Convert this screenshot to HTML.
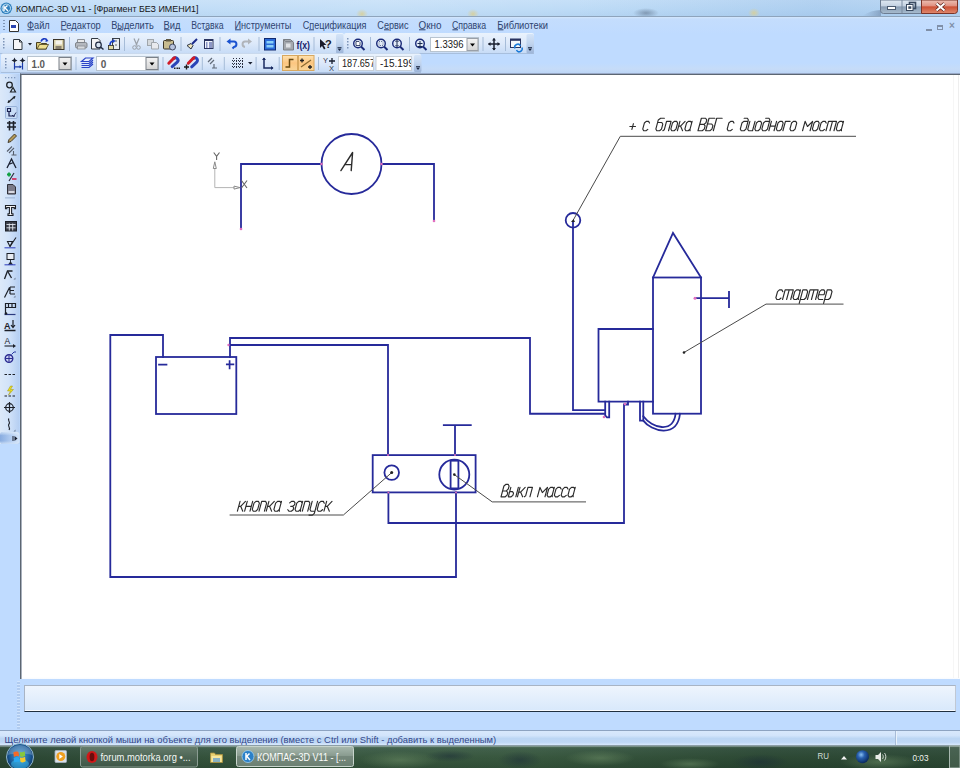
<!DOCTYPE html>
<html><head><meta charset="utf-8">
<style>
*{margin:0;padding:0;box-sizing:border-box}
html,body{width:960px;height:768px;overflow:hidden;background:#BFDBFF;font-family:"Liberation Sans",sans-serif}
.a{position:absolute}
#title{left:0;top:0;width:960px;height:17px;background:linear-gradient(90deg,rgba(255,255,255,0) 0%,rgba(255,255,255,0.12) 40%,rgba(120,160,210,0.0) 60%,rgba(100,150,210,0.18) 85%,rgba(100,150,210,0.1) 100%),linear-gradient(180deg,#c6e0f8 0%,#bddbf6 60%,#b6d5f2 100%);border-bottom:1px solid #8ea4bc}
#title .t{left:15.5px;top:3.6px;font-size:9px;color:#222;white-space:pre;letter-spacing:0.05px}
#menu{left:0;top:17px;width:960px;height:17px;background:linear-gradient(180deg,#d4e6fc 0,#c4ddfd 2px,#bfdbff 100%)}
.mi{top:4px;font-size:9.1px;color:#34496e;white-space:pre}
.mi u{text-decoration:underline}
.tb{height:20px;border-radius:3px;background:linear-gradient(180deg,#eef5fd 0%,#dbe9fa 45%,#c9ddf6 100%);border-bottom:1px solid #a9c2e2}
.sep{width:1px;height:14px;background:#9fb6d6;border-right:1px solid #fff}
.grip{width:2px;height:12px;background:repeating-linear-gradient(180deg,#7f95b5 0 1px,transparent 1px 3px)}
#canvas{left:20px;top:73px;width:940px;height:606px;background:linear-gradient(180deg,#fff 0,#fff 603px,#f4f8ff 606px);border-top:1px solid #98a8c6;border-left:1px solid #5c6672;box-shadow:inset 0 1px 0 #5c6672,inset 1px 0 0 #a8b0bc}
#lefttb{left:0;top:74px;width:20px;height:370px;background:linear-gradient(90deg,#dbe9f9 0%,#cfe2f9 40%,#b8d2f3 100%)}
#status{left:0;top:730px;width:960px;height:16px;background:linear-gradient(180deg,#d8e8fc 0%,#d2e4fb 30%,#bcd6f4 50%,#bed7f5 75%,#d6e7fc 92%,#d0e0f4 100%);border-top:1px solid #8da3c1}
#status .t{left:4.5px;top:2.8px;font-size:9.4px;color:#34478a;white-space:pre}
#task{left:0;top:745px;width:960px;height:23px;background:linear-gradient(180deg,#3f5a55 0%,#2e4a3a 40%,#2d4a30 100%);border-top:1px solid #8a9ba0}
</style></head><body>
<div class="a" style="left:0;top:0;width:960px;height:768px;overflow:hidden">

<!-- title bar -->
<div id="title" class="a">
  <svg class="a" style="left:0;top:2px" width="13" height="13" viewBox="0 0 13 13"><circle cx="6.3" cy="6.3" r="5.8" fill="#2f7fbd"/><circle cx="6.3" cy="6.3" r="4.2" fill="none" stroke="#bfe3f7" stroke-width="1"/><path d="M4 3.5v5.5M4 6.5l3.5-3M5 6l3 3" stroke="#fff" stroke-width="1.4" fill="none"/></svg>
  <svg class="a" style="left:0;top:0" width="880" height="16" viewBox="0 0 880 16">
    <defs>
      <radialGradient id="by"><stop offset="0" stop-color="#d8cf98" stop-opacity="0.9"/><stop offset="1" stop-color="#d8cf98" stop-opacity="0"/></radialGradient>
      <radialGradient id="bd"><stop offset="0" stop-color="#6a7f98" stop-opacity="0.7"/><stop offset="1" stop-color="#6a7f98" stop-opacity="0"/></radialGradient>
    </defs>
    <ellipse cx="362" cy="14" rx="6" ry="5" fill="url(#by)"/>
    <ellipse cx="473" cy="14" rx="6" ry="5" fill="url(#by)"/>
    <ellipse cx="754" cy="13" rx="6" ry="5" fill="url(#by)"/>
    <ellipse cx="646" cy="13" rx="13" ry="5" fill="url(#bd)"/>
  </svg>
  <svg class="a" style="left:0;top:0" width="260" height="16" viewBox="0 0 260 16"><text x="16" y="11.6" font-family="Liberation Sans" font-size="9.2" fill="#151515" textLength="182.5" lengthAdjust="spacingAndGlyphs">КОМПАС-3D V11 - [Фрагмент БЕЗ ИМЕНИ1]</text></svg>
  <!-- window buttons -->
  <svg class="a" style="left:860px;top:0" width="100" height="17" viewBox="860 0 100 17">
    <defs>
      <linearGradient id="wbg" x1="0" y1="0" x2="0" y2="1"><stop offset="0" stop-color="#dfe8f2"/><stop offset="0.45" stop-color="#c4d2e2"/><stop offset="0.5" stop-color="#8a9db4"/><stop offset="1" stop-color="#a8bccf"/></linearGradient>
      <linearGradient id="wbc" x1="0" y1="0" x2="0" y2="1"><stop offset="0" stop-color="#ecc0b4"/><stop offset="0.45" stop-color="#e09080"/><stop offset="0.5" stop-color="#cc5034"/><stop offset="1" stop-color="#e08a70"/></linearGradient>
      <linearGradient id="tsh" x1="0" y1="0" x2="1" y2="0"><stop offset="0" stop-color="#7890b0" stop-opacity="0"/><stop offset="1" stop-color="#6880a0" stop-opacity="0.55"/></linearGradient>
    </defs>
    <path d="M862 16c6-4 12-6 19-6v6z" fill="url(#tsh)"/>
    <path d="M880.5 0v10.5a3 3 0 0 0 3 3h38v-13.5z" fill="url(#wbg)" stroke="#6c7c92" stroke-width="1"/>
    <path d="M921.5 0v13.5h33a3 3 0 0 0 3-3v-10.5z" fill="url(#wbc)" stroke="#7a3428" stroke-width="1"/>
    <rect x="901.5" y="0" width="1" height="13" fill="#7a8ca2"/>
    <rect x="887.5" y="6.5" width="8" height="3" fill="#fff" stroke="#4a5a70" stroke-width="1"/>
    <rect x="909.5" y="2.5" width="6" height="6" fill="none" stroke="#3a4a60" stroke-width="1.6"/>
    <rect x="906.5" y="4.5" width="6.5" height="6" fill="#fff" stroke="#3a4a60" stroke-width="1"/>
    <rect x="908.3" y="6.3" width="3" height="2.5" fill="#3a4a60"/>
    <path d="M936.5 3.5l8 7M944.5 3.5l-8 7" stroke="#5a2018" stroke-width="3.4"/>
    <path d="M936.5 3.5l8 7M944.5 3.5l-8 7" stroke="#fff" stroke-width="2"/>
  </svg>
</div>

<!-- menu -->
<div id="menu" class="a">
  <div class="a grip" style="left:3px;top:3px;height:11px"></div>
  <svg class="a" style="left:8px;top:2px" width="12" height="14" viewBox="0 0 12 14"><path d="M1.5 1.5h6l3 3v8h-9z" fill="#fff" stroke="#333" stroke-width="1"/><rect x="3" y="6" width="5" height="3" fill="#2a45b0"/></svg>
  <svg class="a" style="left:0;top:0" width="600" height="17" viewBox="0 17 600 17">
    <text x="27.0" y="28.6" font-family="Liberation Sans" font-size="10" fill="#2f4470" textLength="22.7" lengthAdjust="spacingAndGlyphs">Файл</text>
    <text x="60.5" y="28.6" font-family="Liberation Sans" font-size="10" fill="#2f4470" textLength="40.3" lengthAdjust="spacingAndGlyphs">Редактор</text>
    <text x="111.2" y="28.6" font-family="Liberation Sans" font-size="10" fill="#2f4470" textLength="42.6" lengthAdjust="spacingAndGlyphs">Выделить</text>
    <text x="163.5" y="28.6" font-family="Liberation Sans" font-size="10" fill="#2f4470" textLength="17.0" lengthAdjust="spacingAndGlyphs">Вид</text>
    <text x="191.2" y="28.6" font-family="Liberation Sans" font-size="10" fill="#2f4470" textLength="32.3" lengthAdjust="spacingAndGlyphs">Вставка</text>
    <text x="234.5" y="28.6" font-family="Liberation Sans" font-size="10" fill="#2f4470" textLength="56.8" lengthAdjust="spacingAndGlyphs">Инструменты</text>
    <text x="302.8" y="28.6" font-family="Liberation Sans" font-size="10" fill="#2f4470" textLength="63.7" lengthAdjust="spacingAndGlyphs">Спецификация</text>
    <text x="377.3" y="28.6" font-family="Liberation Sans" font-size="10" fill="#2f4470" textLength="31.2" lengthAdjust="spacingAndGlyphs">Сервис</text>
    <text x="418.5" y="28.6" font-family="Liberation Sans" font-size="10" fill="#2f4470" textLength="23.0" lengthAdjust="spacingAndGlyphs">Окно</text>
    <text x="451.9" y="28.6" font-family="Liberation Sans" font-size="10" fill="#2f4470" textLength="34.2" lengthAdjust="spacingAndGlyphs">Справка</text>
    <text x="497.3" y="28.6" font-family="Liberation Sans" font-size="10" fill="#2f4470" textLength="50.8" lengthAdjust="spacingAndGlyphs">Библиотеки</text>
    <rect x="27.5" y="29.3" width="6.5" height="1" fill="#2f4470"/><rect x="61" y="29.3" width="5.5" height="1" fill="#2f4470"/><rect x="117" y="29.3" width="6.0" height="1" fill="#2f4470"/><rect x="164" y="29.3" width="5.5" height="1" fill="#2f4470"/><rect x="204" y="29.3" width="5.0" height="1" fill="#2f4470"/><rect x="235" y="29.3" width="6.0" height="1" fill="#2f4470"/><rect x="309" y="29.3" width="5.0" height="1" fill="#2f4470"/><rect x="384" y="29.3" width="5.0" height="1" fill="#2f4470"/><rect x="419" y="29.3" width="6.5" height="1" fill="#2f4470"/><rect x="452.4" y="29.3" width="5.6" height="1" fill="#2f4470"/><rect x="497.8" y="29.3" width="5.7" height="1" fill="#2f4470"/>
  </svg>
  <div class="a" style="left:926px;top:12px;width:6px;height:1.5px;background:#8090a8"></div>
  <div class="a" style="left:937px;top:8px;width:6px;height:5px;border:1px solid #8090a8;border-top-width:2px"></div>
  <div class="a" style="left:949px;top:3px;font:bold 10px 'Liberation Sans';color:#8090a8">×</div>
</div>

<!-- toolbars placeholder -->
<div class="a" style="left:0;top:63px;width:960px;height:10px;background:linear-gradient(180deg,#bfdbff,#c6dcf8 60%,#bcd6f6)"></div>
<svg class="a" style="left:0;top:0" width="960" height="80" viewBox="0 0 960 80">
<defs>
  <linearGradient id="tbg" x1="0" y1="0" x2="0" y2="1">
    <stop offset="0" stop-color="#eaf3fd"/><stop offset="0.5" stop-color="#dde9fa"/><stop offset="1" stop-color="#c6dbf6"/>
  </linearGradient>
  <linearGradient id="chev" x1="0" y1="0" x2="0" y2="1">
    <stop offset="0" stop-color="#d4e4f8"/><stop offset="0.5" stop-color="#c0d4ee"/><stop offset="1" stop-color="#9cb4d8"/>
  </linearGradient>
  <linearGradient id="org" x1="0" y1="0" x2="0" y2="1">
    <stop offset="0" stop-color="#ffe2b0"/><stop offset="0.5" stop-color="#fcc680"/><stop offset="1" stop-color="#f8d69a"/>
  </linearGradient>
  <linearGradient id="ddb" x1="0" y1="0" x2="0" y2="1">
    <stop offset="0" stop-color="#f4f4f4"/><stop offset="1" stop-color="#d4d4d4"/>
  </linearGradient>
</defs>
<!-- bands -->
<rect x="0" y="33" width="344" height="20.5" rx="2" fill="url(#tbg)"/>
<rect x="0" y="53" width="344" height="1" fill="#a8bfdd"/>
<rect x="336" y="34" width="7.5" height="19.5" rx="1.5" fill="url(#chev)"/>
<rect x="344" y="33" width="190" height="20.5" rx="2" fill="url(#tbg)"/>
<rect x="344" y="53" width="190" height="1" fill="#a8bfdd"/>
<rect x="526.5" y="34" width="7.5" height="19.5" rx="1.5" fill="url(#chev)"/>
<rect x="1" y="53.5" width="420" height="19" rx="2" fill="url(#tbg)"/>
<rect x="1" y="72" width="420" height="1" fill="#a8bfdd"/>
<rect x="414" y="55" width="7.5" height="17" rx="1.5" fill="url(#chev)"/>
<!-- chevron arrows -->
<g fill="#1d2a44">
  <path d="M337.5 48.5h4l-2 2.5z"/><rect x="337.5" y="47" width="4" height="0.8"/>
  <path d="M528 48.5h4l-2 2.5z"/><rect x="528" y="47" width="4" height="0.8"/>
  <path d="M416 67.5h4l-2 2.5z"/><rect x="416" y="66" width="4" height="0.8"/>
</g>
<!-- grips -->
<g fill="#7d94b8">
  <rect x="3" y="38" width="1.5" height="1.5"/><rect x="3" y="41" width="1.5" height="1.5"/><rect x="3" y="44" width="1.5" height="1.5"/><rect x="3" y="47" width="1.5" height="1.5"/>
  <rect x="347" y="38" width="1.5" height="1.5"/><rect x="347" y="41" width="1.5" height="1.5"/><rect x="347" y="44" width="1.5" height="1.5"/><rect x="347" y="47" width="1.5" height="1.5"/>
  <rect x="5" y="58" width="1.5" height="1.5"/><rect x="5" y="61" width="1.5" height="1.5"/><rect x="5" y="64" width="1.5" height="1.5"/><rect x="5" y="67" width="1.5" height="1.5"/>
</g>
<!-- separators -->
<g fill="#a6bcd8">
  <rect x="69" y="37" width="1" height="14"/><rect x="124" y="37" width="1" height="14"/><rect x="180.5" y="37" width="1" height="14"/><rect x="219.5" y="37" width="1" height="14"/><rect x="258.5" y="37" width="1" height="14"/><rect x="313.5" y="37" width="1" height="14"/>
  <rect x="370" y="37" width="1" height="14"/><rect x="409" y="37" width="1" height="14"/><rect x="482.5" y="37" width="1" height="14"/><rect x="505" y="37" width="1" height="14"/>
  <rect x="75.5" y="57" width="1" height="13"/><rect x="162.5" y="57" width="1" height="13"/><rect x="201.8" y="57" width="1" height="13"/><rect x="223.8" y="57" width="1" height="13"/><rect x="255.6" y="57" width="1" height="13"/><rect x="278.7" y="57" width="1" height="13"/><rect x="318" y="57" width="1" height="13"/>
</g>
<!-- ===== toolbar 1 icons ===== -->
<!-- new -->
<path d="M13.5 39.5h6l2.5 2.5v7.5h-8.5z" fill="#f6f6f8" stroke="#303840" stroke-width="1"/>
<path d="M19.5 39.5v2.5h2.5" fill="none" stroke="#303840" stroke-width="1"/>
<path d="M28 43h4l-2 2.5z" fill="#1a2030"/>
<!-- open -->
<path d="M36.5 42.5h4l1 1h5v5.5h-10z" fill="#d8c878" stroke="#4a4020" stroke-width="1"/>
<path d="M37 49l2.5-4.5h9l-2.5 4.5z" fill="#f0e090" stroke="#4a4020" stroke-width="0.8"/>
<path d="M41 41.5c1-3 4-3.5 6-1.5" fill="none" stroke="#1a3ac0" stroke-width="1.6"/>
<path d="M46 38.5l2.5 2.5l-3 1z" fill="#1a3ac0"/>
<!-- save -->
<rect x="53.5" y="39.5" width="10.5" height="10" fill="#d8d0a8" stroke="#3a3428" stroke-width="1"/>
<rect x="55.5" y="40.5" width="6.5" height="4" fill="#f4f2ea"/>
<rect x="55.5" y="46" width="6" height="3" fill="#888070"/>
<!-- print (gray) -->
<path d="M77.5 39.5h7v3h-7z" fill="#e8e8e8" stroke="#8a8e94" stroke-width="1"/>
<rect x="75.5" y="42.5" width="11.5" height="5.5" rx="1.5" fill="#b4b8be" stroke="#80848a" stroke-width="1"/>
<rect x="77.5" y="46" width="7.5" height="3" fill="#d8dade" stroke="#8a8e94" stroke-width="0.8"/>
<!-- preview -->
<path d="M91.5 38.5h6.5l2 2v8.5h-8.5z" fill="#f4f4f4" stroke="#303840" stroke-width="1"/>
<circle cx="98.5" cy="45" r="2.8" fill="#d8e4f0" stroke="#202a40" stroke-width="1.2"/>
<path d="M100.5 47l3 2.5" stroke="#202a40" stroke-width="1.6"/>
<!-- third doc -->
<rect x="112.5" y="38.5" width="7" height="11" fill="#e8ecf0" stroke="#3a4048" stroke-width="1"/>
<path d="M116 40v2M116 44v2" stroke="#3a4048" stroke-width="0.8"/>
<rect x="108.5" y="45.5" width="5" height="4" fill="#e0d8a0" stroke="#2a2a2a" stroke-width="0.8"/>
<path d="M110 45c0-3 2-4 4-4" fill="none" stroke="#1a40c8" stroke-width="1.6"/>
<path d="M113 39l2.5 2l-2.5 2z" fill="#1a40c8"/>
<!-- cut gray -->
<path d="M134 38.5l3 7M139 38.5l-3 7" stroke="#9aa0a8" stroke-width="1.2" fill="none"/>
<circle cx="134.5" cy="47.5" r="1.8" fill="none" stroke="#9aa0a8" stroke-width="1"/>
<circle cx="138.5" cy="47.5" r="1.8" fill="none" stroke="#9aa0a8" stroke-width="1"/>
<!-- copy gray -->
<rect x="147.5" y="39.5" width="6" height="6" fill="#d4d8dc" stroke="#a0a6ac" stroke-width="1"/>
<path d="M151.5 42.5h5l2 2v4.5h-7z" fill="#e8eaee" stroke="#a0a6ac" stroke-width="1"/>
<!-- paste -->
<rect x="163.5" y="40.5" width="10" height="8.5" rx="1" fill="#c8bc90" stroke="#3a3428" stroke-width="1"/>
<rect x="166" y="39" width="5" height="2.5" fill="#605840"/>
<circle cx="172.5" cy="47" r="3" fill="#b8c4e0" stroke="#404860" stroke-width="1"/>
<!-- brush -->
<path d="M187 45.5l4-2l2 2l-2 3.5z" fill="#f0e8c0" stroke="#2a3040" stroke-width="1"/>
<path d="M192 44l5-5" stroke="#1a2a8a" stroke-width="2"/>
<!-- table -->
<rect x="204.5" y="39.5" width="8.5" height="9" fill="#f0f4fa" stroke="#2a3460" stroke-width="1"/>
<rect x="204.5" y="39.5" width="8.5" height="1.5" fill="#2a3460"/>
<path d="M206 43h1.5M206 45h1.5M206 47h1.5M209 43h3M209 45h3M209 47h3" stroke="#2a3a90" stroke-width="1"/>
<!-- undo -->
<path d="M229.5 41.5h4.5c3 0 3.5 5 0 5.5l-1.5 1.5" fill="none" stroke="#1a52d0" stroke-width="2"/>
<path d="M226.5 41.5l4-3v6z" fill="#1a52d0"/>
<!-- redo gray -->
<path d="M249 41.5h-4c-3 0-3.5 5 0 5.5" fill="none" stroke="#b0b4ba" stroke-width="2"/>
<path d="M252 41.5l-4-3v6z" fill="#b0b4ba"/>
<!-- blue box -->
<rect x="264.5" y="38.5" width="11" height="11.5" fill="#2a6ad8" stroke="#102a70" stroke-width="1"/>
<rect x="266.5" y="41" width="7" height="2.5" fill="#8ad0f8"/>
<rect x="266.5" y="45" width="7" height="2.5" fill="#8ad0f8"/>
<!-- gray icon -->
<path d="M283.5 39.5h7l3 3v7.5h-10z" fill="#a4a8ae" stroke="#7a7e84" stroke-width="1"/>
<path d="M283.5 39.5l2 2h6l2 -0.5" fill="none" stroke="#7a7e84" stroke-width="0.8"/>
<rect x="286" y="43.5" width="4.5" height="4" fill="#e0e2e6"/>
<!-- f(x) -->
<text x="296.5" y="48.5" font-family="Liberation Sans" font-weight="bold" font-size="11.5" fill="#18206a" textLength="13.5" lengthAdjust="spacingAndGlyphs">f(x)</text>
<!-- arrow ? -->
<path d="M320 39v9l2-2l2 3.5l1.5-1l-2-3.5h3z" fill="#1a1a2a"/>
<text x="325" y="48" font-family="Liberation Sans" font-weight="bold" font-size="11" fill="#1a1a2a">?</text>
<!-- zoom icons -->
<g fill="none" stroke="#1a2a78" stroke-width="1.4">
  <circle cx="358" cy="43.5" r="4.3" fill="#e4ecf8"/><path d="M361 46.5l3.5 3.5" stroke-width="2"/>
  <circle cx="381" cy="43.5" r="4.3" fill="#e4ecf8"/><path d="M384 46.5l3.5 3.5" stroke-width="2"/>
  <circle cx="397" cy="43.5" r="4.3" fill="#e4ecf8"/><path d="M400 46.5l3.5 3.5" stroke-width="2"/>
  <circle cx="420" cy="43.5" r="4.3" fill="#e4ecf8"/><path d="M423 46.5l3.5 3.5" stroke-width="2"/>
</g>
<path d="M356 41.5h3l1 1v3h-4z" fill="#fff" stroke="#1a2a50" stroke-width="0.8"/>
<rect x="379" y="41.5" width="4" height="4" fill="none" stroke="#4a5a80" stroke-width="0.8" stroke-dasharray="1 1"/>
<path d="M397 40.5v6M395.5 42l1.5-1.5l1.5 1.5M395.5 45l1.5 1.5l1.5-1.5" fill="none" stroke="#1a2a50" stroke-width="1"/>
<path d="M417.5 43.5h5M420 41v5M417.5 46.5h5" fill="none" stroke="#1a2a50" stroke-width="1"/>
<!-- combo 1.3396 -->
<rect x="430.5" y="37.5" width="48" height="14" fill="#fff" stroke="#b8c4d0" stroke-width="1"/>
<rect x="467" y="38.5" width="11" height="12" fill="url(#ddb)" stroke="#9aa0a8" stroke-width="1"/>
<path d="M470 43.5h5l-2.5 3z" fill="#000"/>
<text x="434.5" y="48.3" font-family="Liberation Sans" font-size="11" fill="#202020" textLength="29" lengthAdjust="spacingAndGlyphs">1.3396</text>
<!-- move cross -->
<path d="M494 38.5v11.5M488.5 44h11" stroke="#1a2030" stroke-width="1.5"/>
<path d="M494 38l-2 2.5h4zM494 50.5l-2-2.5h4zM488 44l2.5-2v4zM500 44l-2.5-2v4z" fill="#1a2030"/>
<!-- window refresh -->
<rect x="510.5" y="39" width="10" height="8.5" fill="#f4f6fa" stroke="#2a3460" stroke-width="1"/>
<rect x="510.5" y="39" width="10" height="1.8" fill="#2a3460"/>
<path d="M515 48.5a3 3 0 0 1 5.5-2.5M522 47.5a3 3 0 0 1-5.5 2.5" fill="none" stroke="#1a7ad8" stroke-width="1.5"/>
<!-- ===== toolbar 2 icons ===== -->
<!-- step icon -->
<path d="M14.5 57.5l0.9 2.1l2.1 0.9l-2.1 0.9l-0.9 2.1l-0.9-2.1l-2.1-0.9l2.1-0.9z" fill="#1a2030"/>
<path d="M22.5 57.5l0.9 2.1l2.1 0.9l-2.1 0.9l-0.9 2.1l-0.9-2.1l-2.1-0.9l2.1-0.9z" fill="#1a2030"/>
<path d="M14.5 63v6.5M22.5 63v6.5M15 66.8h6" stroke="#1a3aa8" stroke-width="1.2"/>
<path d="M19.5 65.3l2.5 1.5l-2.5 1.5z" fill="#1a3aa8"/>
<!-- combo 1.0 -->
<rect x="27.5" y="56.5" width="44" height="14" fill="#fff" stroke="#b8c4d0" stroke-width="1"/>
<rect x="59" y="57.5" width="12" height="12" fill="url(#ddb)" stroke="#7a8088" stroke-width="1"/>
<path d="M62.5 62.5h5l-2.5 3z" fill="#000"/>
<text x="31.5" y="67.8" font-family="Liberation Sans" font-weight="bold" font-size="10" fill="#5a5a5a" textLength="13.5" lengthAdjust="spacingAndGlyphs">1.0</text>
<!-- layers -->
<g fill="none" stroke="#2a44c8" stroke-width="1.2">
  <path d="M81.5 61.5l4-3.5h7.5l-4 3.5z" fill="#e8eefc"/>
  <path d="M81.5 63.5h7.5l4-3.5M81.5 65.5h7.5l4-3.5M81.5 67.5h7.5l4-3.5"/>
</g>
<!-- combo 0 -->
<rect x="96.5" y="56.5" width="62" height="14" fill="#fff" stroke="#b8c4d0" stroke-width="1"/>
<rect x="146" y="57.5" width="12" height="12" fill="url(#ddb)" stroke="#7a8088" stroke-width="1"/>
<path d="M149.5 62.5h5l-2.5 3z" fill="#000"/>
<text x="100.8" y="67.8" font-family="Liberation Sans" font-weight="bold" font-size="10" fill="#5a5a5a">0</text>
<!-- magnets -->
<path d="M173.5 58.5a2.6 2.6 0 0 1 3.7 3.7L172.2 66.6" fill="none" stroke="#2a44b8" stroke-width="3" stroke-linecap="round"/>
<path d="M168.8 63.2L173.5 58.5" stroke="#d01c28" stroke-width="3" stroke-linecap="round"/>
<path d="M173.5 58.5a2.6 2.6 0 0 1 2.2 -0.6" fill="none" stroke="#d01c28" stroke-width="3"/>
<rect x="174" y="67.5" width="1.5" height="1.5" fill="#202020"/><rect x="176.5" y="67.5" width="1.5" height="1.5" fill="#202020"/><rect x="178.5" y="67.5" width="1.5" height="1.5" fill="#202020"/>
<path d="M193 58.5a2.6 2.6 0 0 1 3.7 3.7L191.7 66.8" fill="none" stroke="#2a44b8" stroke-width="3" stroke-linecap="round"/>
<path d="M188.3 63.2L193 58.5" stroke="#d01c28" stroke-width="3" stroke-linecap="round"/>
<path d="M193 58.5a2.6 2.6 0 0 1 2.2 -0.6" fill="none" stroke="#d01c28" stroke-width="3"/>
<path d="M186.5 64.5v5M184 67h5" stroke="#1a1a1a" stroke-width="1.4"/>
<!-- parallel -->
<path d="M208 62l4-4M210 64l4-4M214 64v4M212 68h5" stroke="#606a78" stroke-width="1.2"/>
<!-- grid -->
<path d="M232 60.5h11M232 63.5h11M232 66.5h11" stroke="#2a3040" stroke-width="1" stroke-dasharray="1 1"/><path d="M233.5 58v10M236.5 58v10M239.5 58v10M242.5 58v10" stroke="#2a3040" stroke-width="1" stroke-dasharray="1 2" stroke-dashoffset="0"/>
<path d="M248 62h4.5l-2.2 2.5z" fill="#1a2030"/>
<!-- axis -->
<path d="M264 58v10h9" fill="none" stroke="#1a2a60" stroke-width="1.5"/>
<path d="M262 60l2-2.5l2 2.5zM271 66l2.5 2l-2.5 2z" fill="#1a2a60"/>
<!-- orange buttons -->
<rect x="282.5" y="55.5" width="15" height="15" fill="url(#org)" stroke="#d8a860" stroke-width="1"/>
<path d="M285.5 67h4v-7.5h4" fill="none" stroke="#6a4a10" stroke-width="1.5"/>
<rect x="298.5" y="55.5" width="15.5" height="15" fill="url(#org)" stroke="#d8a860" stroke-width="1"/>
<path d="M301 67l10-7" stroke="#8a6a30" stroke-width="1.2"/>
<path d="M302 58.5v4M300 60.5h4M310 65v4M308 67h4" stroke="#202020" stroke-width="1.3"/>
<!-- Y+X -->
<text x="323" y="63" font-family="Liberation Sans" font-size="7.5" fill="#303848">Y</text>
<text x="329" y="70.5" font-family="Liberation Sans" font-size="7.5" fill="#303848">X</text>
<path d="M332 58v6M329 61h6" stroke="#1a2030" stroke-width="1.3"/>
<!-- coordinate inputs -->
<rect x="338.5" y="56.5" width="35" height="14" fill="#fff" stroke="#c8d0d8" stroke-width="1"/>
<rect x="376" y="56.5" width="35.5" height="14" fill="#fff" stroke="#c8d0d8" stroke-width="1"/>
<svg x="339" y="57" width="34" height="13"><text x="3" y="10.3" font-family="Liberation Sans" font-size="11" fill="#202020" textLength="33" lengthAdjust="spacingAndGlyphs">187.657</text></svg>
<svg x="376.5" y="57" width="34.5" height="13"><text x="3.5" y="10.3" font-family="Liberation Sans" font-size="11" fill="#202020" textLength="34" lengthAdjust="spacingAndGlyphs">-15.199</text></svg>
</svg>


<!-- left toolbar -->
<svg class="a" style="left:0;top:74px" width="20" height="372" viewBox="0 74 20 372">
<defs>
  <linearGradient id="ltg" x1="0" y1="0" x2="1" y2="0">
    <stop offset="0" stop-color="#dce9f9"/><stop offset="0.45" stop-color="#d2e3f9"/><stop offset="1" stop-color="#b4cef2"/>
  </linearGradient>
  <linearGradient id="lte" x1="0" y1="0" x2="1" y2="0">
    <stop offset="0" stop-color="#88ace0"/><stop offset="0.6" stop-color="#b4cef2"/><stop offset="1" stop-color="#d4e4f8"/>
  </linearGradient>
  <linearGradient id="ltv" x1="0" y1="0" x2="0" y2="1">
    <stop offset="0" stop-color="#e4f0fc" stop-opacity="0.7"/><stop offset="0.3" stop-color="#e4f0fc" stop-opacity="0"/><stop offset="0.75" stop-color="#e4f0fc" stop-opacity="0"/><stop offset="1" stop-color="#d0e2f8" stop-opacity="0.8"/>
  </linearGradient>
</defs>
<rect x="0" y="74" width="19.5" height="370" fill="url(#ltg)"/>
<rect x="0" y="432" width="19.5" height="12" rx="3" fill="url(#lte)"/><rect x="0" y="432" width="19.5" height="12" rx="3" fill="url(#ltv)"/>
<path d="M14.5 436v5l3-2.5z" fill="#1a2030"/><rect x="12.5" y="436" width="1" height="5" fill="#1a2030"/>
<g fill="#8098bc"><rect x="5" y="77" width="1.3" height="1.3"/><rect x="8" y="77" width="1.3" height="1.3"/><rect x="11" y="77" width="1.3" height="1.3"/><rect x="14" y="77" width="1.3" height="1.3"/></g>
<!-- 1 circle + triangle -->
<circle cx="9.5" cy="85" r="2.8" fill="none" stroke="#202428" stroke-width="1.3"/>
<path d="M13 87.5l2.5 4.5h-5z" fill="none" stroke="#202428" stroke-width="1.2"/>
<!-- 2 dimension -->
<path d="M8 102.5l7-6" stroke="#202428" stroke-width="1.2"/>
<path d="M7.5 103l1-3l2 2zM15.5 96l-1 3l-2-2z" fill="#202428"/>
<!-- 3 selected -->
<rect x="5.5" y="106.5" width="11.5" height="12" rx="1" fill="#c8dcf6" stroke="#8aa6d0" stroke-width="0.8"/>
<path d="M7.5 108.5h3v3h-3zM9 111.5v4.5h6" fill="none" stroke="#1a2050" stroke-width="1.2"/>
<path d="M12 115l1.5 1.5l2.5-4" fill="none" stroke="#1a2050" stroke-width="0.9"/>
<!-- 4 hash -->
<path d="M7 123h9M7 127h9M9.5 121v9.5M13.5 121v9.5" stroke="#1c2028" stroke-width="1.6"/>
<!-- 5 pencil -->
<path d="M8 142.5l1-3l5.5-5.5l2 2l-5.5 5.5z" fill="#b49a58" stroke="#3a3020" stroke-width="0.9"/>
<!-- 6 parallel -->
<path d="M7 151.5l5-5M9 153l5-5M13.5 151v4M11.5 155h5" stroke="#565e6c" stroke-width="1.1"/>
<!-- 7 compass angle -->
<path d="M7 168l4.5-9l4.5 9M8.5 164.5l5-2" fill="none" stroke="#1a2030" stroke-width="1.3"/>
<!-- 8 green/red -->
<path d="M7 174.5h4M9 172.5v4" stroke="#10a040" stroke-width="1.8"/>
<path d="M9 181l5-8" stroke="#303040" stroke-width="1.2"/>
<path d="M12 179h4.5" stroke="#d02050" stroke-width="1.6"/>
<!-- 9 document -->
<path d="M7.5 184.5h5.5l2.5 2.5v7h-8z" fill="#7a7a88" stroke="#303038" stroke-width="1"/>
<rect x="8.5" y="191" width="6" height="2" fill="#d8d8e0"/>
<!-- separator -->
<rect x="5" y="197.5" width="10" height="0.8" fill="#8ea6c8"/>
<!-- T -->
<path d="M5.5 205.5h10v3.2h-1.3v-1.2h-2.6v6.3h1.4v1.7h-5v-1.7h1.4v-6.3h-2.6v1.2h-1.3z" fill="#f4f4f4" stroke="#1c2028" stroke-width="1.1"/>
<!-- table -->
<rect x="5.5" y="221.5" width="11" height="9.5" fill="#3a3e48" stroke="#1c2028" stroke-width="1"/>
<path d="M6.5 224.5h9M6.5 227.8h9M9.3 223.5v7M12.7 223.5v7" stroke="#e0e4ec" stroke-width="0.9"/>
<!-- roughness -->
<path d="M7.5 241.5h5l-2.5 5z" fill="none" stroke="#1c2028" stroke-width="1.1"/>
<path d="M10 246.5l6-9" stroke="#1c2028" stroke-width="1.1"/>
<path d="M4.5 247.8h11" stroke="#3a4ac0" stroke-width="1.1"/>
<!-- base symbol -->
<rect x="7" y="253.5" width="7" height="6" fill="#e8ecf2" stroke="#1c2028" stroke-width="1"/>
<path d="M10.5 259.5v3M8.5 264.5l2-2.5l2 2.5z" fill="#1c2028" stroke="#1c2028" stroke-width="0.9"/>
<path d="M4.5 264.8h11" stroke="#3a4ac0" stroke-width="1.1"/>
<!-- leader -->
<path d="M4.5 279l3-8h5" fill="none" stroke="#1c2028" stroke-width="1.3"/>
<path d="M7.5 271l4 7" stroke="#1c2028" stroke-width="1.3"/>
<path d="M13.5 279.5h2v-2z" fill="#6a7a90"/>
<!-- ∠E -->
<path d="M4.5 297.5l5-10M10 287h5M10 290.5h4M10 294h5M10 287v7" fill="none" stroke="#1c2028" stroke-width="1.2"/>
<path d="M13.5 297.5h2v-2z" fill="#6a7a90"/>
<!-- table baseline -->
<path d="M5.5 313.5v-10h10v4h-10M8.5 303.5v4M12 303.5v4" fill="none" stroke="#1c2028" stroke-width="1.2"/>
<path d="M4.5 314.5h11" stroke="#2a3a80" stroke-width="1.2"/>
<circle cx="6" cy="313.5" r="1.3" fill="#1c2028"/>
<!-- A↓ -->
<text x="4" y="328.5" font-family="Liberation Sans" font-size="9" font-weight="bold" fill="#1c2028">A</text>
<path d="M13 320v7M11 325l2 2.5l2-2.5" fill="none" stroke="#1c2028" stroke-width="1.2"/>
<path d="M4.5 330.5h11" stroke="#1c2028" stroke-width="1.5"/>
<!-- A→ -->
<text x="4.5" y="344" font-family="Liberation Sans" font-size="8.5" fill="#1c2028">A</text>
<path d="M4.5 346h9" stroke="#1c2028" stroke-width="1.1"/><path d="M13 344l3 2l-3 2z" fill="#1c2028"/>
<!-- circle icon -->
<circle cx="9" cy="358.5" r="3.8" fill="#c8d0f0" stroke="#2a2a90" stroke-width="1.4"/>
<path d="M6 358.5h6M9 355.5v6" stroke="#2a2a90" stroke-width="1"/>
<path d="M11.5 354.5l2.5-2.5h2" fill="none" stroke="#2a3aa0" stroke-width="1"/>
<!-- dashes -->
<path d="M4.5 374.5h11" stroke="#1c2028" stroke-width="1" stroke-dasharray="2.5 1.5"/>
<!-- lightning -->
<path d="M10.5 386l-3 5h3l-2 4l5-5.5h-3l2-3.5z" fill="#e8e020" stroke="#a09010" stroke-width="0.5"/>
<path d="M4.5 396h11" stroke="#1c2028" stroke-width="1" stroke-dasharray="2.5 1.5"/>
<!-- crosshair -->
<circle cx="9.5" cy="407.5" r="3.8" fill="none" stroke="#1c2028" stroke-width="1.2"/>
<path d="M9.5 402v11M4 407.5h11" stroke="#1c2028" stroke-width="1.2"/>
<!-- wave -->
<path d="M9 418.5c-2 2 2 3.5 0 5.5s2 3.5 0 6" fill="none" stroke="#1c2028" stroke-width="1.1"/>
<path d="M13.5 431.5h2v-2z" fill="#6a7a90"/>
</svg>


<!-- canvas -->
<div id="canvas" class="a"></div>

<!-- drawing -->
<div class="a" style="left:953px;top:75px;width:1px;height:603px;background:#f6f6f6"></div><div class="a" style="left:958px;top:75px;width:1px;height:603px;background:#eeeeee"></div>
<svg class="a" style="left:0;top:0" width="960" height="768" viewBox="0 0 960 768">
<g fill="none" stroke="#262a9a" stroke-width="1.8" stroke-linecap="square">
  <!-- ammeter -->
  <path d="M241 229V164H321.5"/>
  <circle cx="351.5" cy="164" r="30"/>
  <path d="M381.5 164H434V221"/>
  <!-- top small circle + wire -->
  <circle cx="573" cy="220.3" r="7.3"/>
  <path d="M573 222V410.2H604"/>
  <!-- starter -->
  <path d="M653 277.5L673 233L701 277.5"/>
  <rect x="653" y="277.5" width="48" height="136.2"/>
  <path d="M695 298.2H729M729 292V307"/>
  <path d="M653 329H598.5V401.7H653"/>
  <path d="M605.2 401.7V415.5L607 417.3H609.2V401.7"/>
  <path d="M628 401.7V404.5H624V523H388.4V492.4"/>
  <path d="M640 401.7V420.6H643.3V401.7"/>
  <path d="M643.3 420.6C651 431 677 439 680 413.75"/>
  <path d="M643.3 416.3C652 428 673 434 675.6 413.75"/>
  <!-- battery -->
  <rect x="156" y="357" width="80.3" height="57"/>
  <path d="M230 357V338H530V413.75H604"/>
  <path d="M230 345H388V455"/>
  <path d="M163 357V335H110.3V577H456V492.4"/>
  <path d="M159 364.6H166.5M226.8 364.4H233.4M229.6 361.2V368.4" stroke-width="1.7"/>
  <!-- switch box -->
  <rect x="372.7" y="455.1" width="102.9" height="37.3"/>
  <circle cx="391.7" cy="472.6" r="7.3"/>
  <circle cx="454.3" cy="474.6" r="15"/>
  <rect x="450.6" y="460.7" width="7.8" height="27.7"/>
  <path d="M443.8 425.2H470.8M455 425.2V455"/>
</g>
<!-- axes -->
<g fill="none" stroke="#b4b4b4" stroke-width="1">
  <path d="M214.8 187.6V168.5M214.8 187.6H234"/>
  <path d="M213.3 168.5L214.8 161.8L216.3 168.5Z" stroke="#8a8a8a"/>
  <path d="M234 186.1L240 187.6L234 189.1Z" stroke="#8a8a8a"/>
</g>
<g fill="none" stroke="#666" stroke-width="1.1">
  <path d="M213.7 152.5L216.6 156.3L219.5 152.5M216.6 156.3V160"/>
  <path d="M241.5 180.5L247 188M247 180.5L241.5 188"/>
</g>
<!-- leaders -->
<g fill="none" stroke="#4a4a4a" stroke-width="1">
  <path d="M573 220.5L620.3 136.3H856"/>
  <path d="M684 352.5L766 304.1H843.5"/>
  <path d="M391.7 472.6L343.4 515H229.6"/>
  <path d="M454.3 474.6L492.2 501.9H586"/>
</g>
<g fill="#222">
  <circle cx="684" cy="352.5" r="1.3"/>
  <circle cx="391.7" cy="472.6" r="1.5"/>
  <circle cx="454.3" cy="474.6" r="1.3"/>
  <path d="M571 222L573.5 219L575 222z"/>
</g>
<!-- pink points -->
<g fill="#e070c0">
  <circle cx="241" cy="229" r="1.3"/><circle cx="321.5" cy="164" r="1.3"/><circle cx="381.5" cy="164" r="1.3"/><circle cx="434" cy="221" r="1.3"/>
  <circle cx="695" cy="298.2" r="1.5"/><circle cx="604" cy="417" r="1.3"/><circle cx="625" cy="404" r="1.3"/>
  <circle cx="228.5" cy="345" r="1.2"/><circle cx="388" cy="455" r="1"/><circle cx="455" cy="455" r="1"/><circle cx="388.4" cy="492.4" r="1"/><circle cx="456" cy="492.4" r="1"/>
</g>
<!-- labels -->
<g fill="none" stroke="#2c2c2c" stroke-width="1.15" stroke-linejoin="round" stroke-linecap="round">
<path d="M631.90 129.34L633.42 123.70M629.84 126.52L635.48 126.52M649.53 123.04L648.57 121.35L646.22 121.35L644.36 123.04L642.73 129.06L643.68 130.75L646.03 130.75L647.83 129.34M664.39 118.25L660.63 118.25L658.30 119.94L655.84 129.06L656.79 130.75L659.61 130.75L661.48 129.06L662.80 124.17L661.84 122.48L657.61 122.48M662.87 130.75L664.25 129.81L666.54 121.35L671.05 121.35L668.51 130.75M671.77 130.75L674.12 130.75L675.99 129.06L677.61 123.04L676.66 121.35L674.31 121.35L672.44 123.04L670.82 129.06ZM677.39 130.75L679.92 121.35M678.65 126.05L680.53 126.05L685.09 121.35M680.53 126.05L682.56 130.75M692.12 121.35L690.03 129.06L690.05 130.75M691.66 123.04L690.71 121.35L688.36 121.35L686.49 123.04L684.86 129.06L685.82 130.75L688.17 130.75L690.03 129.06M697.98 130.75L701.36 118.25L705.59 118.25L706.75 119.85L705.97 122.76L703.94 124.36L699.71 124.36M703.94 124.36L705.10 125.96L704.24 129.15L702.21 130.75L697.98 130.75M714.87 118.25L709.04 118.25L705.66 130.75L709.89 130.75L711.92 129.15L712.89 125.58L711.72 123.98L707.49 123.98M713.34 130.75L716.72 118.25L722.17 118.25M733.98 123.04L733.03 121.35L730.68 121.35L728.81 123.04L727.19 129.06L728.14 130.75L730.49 130.75L732.28 129.34M744.15 118.25L747.44 118.25L748.39 119.94L745.93 129.06L744.06 130.75L741.24 130.75L740.29 129.06L741.91 123.04L743.78 121.35L748.01 121.35M749.86 121.35L747.71 129.34L748.74 130.75L752.50 130.75M755.03 121.35L752.50 130.75M755.76 130.75L758.11 130.75L759.97 129.06L761.60 123.04L760.65 121.35L758.30 121.35L756.43 123.04L754.80 129.06ZM765.69 118.25L768.98 118.25L769.93 119.94L767.47 129.06L765.60 130.75L762.78 130.75L761.83 129.06L763.45 123.04L765.32 121.35L769.55 121.35M771.40 121.35L768.86 130.75M770.13 126.05L775.30 126.05M776.57 121.35L774.03 130.75M777.29 130.75L779.64 130.75L781.51 129.06L783.14 123.04L782.18 121.35L779.83 121.35L777.97 123.04L776.34 129.06ZM782.91 130.75L785.44 121.35L790.14 121.35M790.87 130.75L793.22 130.75L795.09 129.06L796.71 123.04L795.76 121.35L793.41 121.35L791.54 123.04L789.92 129.06ZM802.56 130.75L805.10 121.35L807.47 126.52L812.62 121.35L810.08 130.75M813.35 130.75L815.70 130.75L817.56 129.06L819.19 123.04L818.23 121.35L815.88 121.35L814.02 123.04L812.39 129.06ZM826.21 123.04L825.26 121.35L822.91 121.35L821.04 123.04L819.41 129.06L820.37 130.75L822.72 130.75L824.51 129.34M825.98 130.75L828.52 121.35L836.51 121.35L833.97 130.75M832.47 121.35L829.93 130.75M843.53 121.35L841.45 129.06L841.46 130.75M843.07 123.04L842.12 121.35L839.77 121.35L837.90 123.04L836.28 129.06L837.23 130.75L839.58 130.75L841.45 129.06"/>
<path d="M782.81 291.63L781.83 289.90L779.43 289.90L777.53 291.63L775.87 297.77L776.84 299.50L779.24 299.50L781.07 298.06M782.56 299.50L785.16 289.90L793.32 289.90L790.72 299.50M789.19 289.90L786.60 299.50M800.48 289.90L798.36 297.77L798.37 299.50M800.01 291.63L799.04 289.90L796.64 289.90L794.73 291.63L793.08 297.77L794.05 299.50L796.45 299.50L798.36 297.77M799.22 303.34L802.85 289.90L806.69 289.90L807.66 291.63L806.00 297.77L804.09 299.50L800.25 299.50M807.42 299.50L810.01 289.90L818.17 289.90L815.58 299.50M814.04 289.90L811.45 299.50M822.74 299.50L818.90 299.50L817.93 297.77L819.59 291.63L821.50 289.90L823.90 289.90L824.87 291.63L824.04 294.70L818.76 294.70M823.59 303.34L827.22 289.90L831.06 289.90L832.03 291.63L830.37 297.77L828.47 299.50L824.63 299.50"/>
<path d="M237.40 511.20L240.05 501.40M238.72 506.30L240.68 506.30L245.44 501.40M240.68 506.30L242.79 511.20M247.26 501.40L244.61 511.20M245.94 506.30L251.33 506.30M252.65 501.40L250.00 511.20M253.30 511.20L255.75 511.20L257.69 509.44L259.39 503.16L258.39 501.40L255.94 501.40L254.00 503.16L252.30 509.44ZM259.04 511.20L261.69 501.40L265.61 501.40L266.60 503.16L264.43 511.20M266.25 511.20L268.90 501.40M267.58 506.30L269.54 506.30L274.29 501.40M269.54 506.30L271.64 511.20M281.50 501.40L279.33 509.44L279.35 511.20M281.03 503.16L280.03 501.40L277.58 501.40L275.64 503.16L273.94 509.44L274.94 511.20L277.39 511.20L279.33 509.44M289.65 502.87L291.52 501.40L293.97 501.40L295.04 502.87L294.52 504.83L292.65 506.30L290.69 506.30M292.65 506.30L293.72 507.77L293.19 509.73L291.33 511.20L288.88 511.20L287.80 509.73M302.66 501.40L300.49 509.44L300.50 511.20M302.18 503.16L301.19 501.40L298.74 501.40L296.79 503.16L295.10 509.44L296.09 511.20L298.54 511.20L300.49 509.44M302.32 511.20L304.97 501.40L308.89 501.40L309.88 503.16L307.71 511.20M312.18 501.40L310.01 509.44L311.01 511.20L314.93 511.20M317.57 501.40L314.34 513.36L312.40 515.12L308.97 515.12M324.31 503.16L323.32 501.40L320.87 501.40L318.92 503.16L317.23 509.44L318.22 511.20L320.67 511.20L322.54 509.73M323.96 511.20L326.61 501.40M325.29 506.30L327.25 506.30L332.00 501.40M327.25 506.30L329.35 511.20"/>
<path d="M501.00 496.80L503.92 485.99L506.07 484.30L508.14 484.30L509.09 485.99L508.33 488.81L506.33 490.97L502.57 490.97M506.33 490.97L507.78 492.57L507.10 495.11L505.23 496.80L501.00 496.80M510.82 487.40L508.29 496.80L511.11 496.80L512.90 495.39L513.53 493.04L512.50 491.63L509.68 491.63M518.34 487.40L515.81 496.80M517.45 496.80L519.99 487.40M518.72 492.10L520.60 492.10L525.16 487.40M520.60 492.10L522.62 496.80M524.27 496.80L525.65 495.86L527.94 487.40L532.45 487.40L529.91 496.80M537.43 496.80L539.97 487.40L542.34 492.57L547.49 487.40L544.95 496.80M554.31 487.40L552.23 495.11L552.24 496.80M553.85 489.09L552.90 487.40L550.55 487.40L548.68 489.09L547.06 495.11L548.01 496.80L550.36 496.80L552.23 495.11M561.14 489.09L560.19 487.40L557.84 487.40L555.97 489.09L554.35 495.11L555.30 496.80L557.65 496.80L559.44 495.39M567.96 489.09L567.00 487.40L564.65 487.40L562.79 489.09L561.16 495.11L562.12 496.80L564.47 496.80L566.26 495.39M575.23 487.40L573.15 495.11L573.16 496.80M574.77 489.09L573.82 487.40L571.47 487.40L569.60 489.09L567.98 495.11L568.93 496.80L571.28 496.80L573.15 495.11"/>
<path d="M340.9 170.6L352.6 152.5L351.2 170.6M345.3 164.6H351.6" stroke-width="1.4"/>
</g>
</svg>

<!-- bottom panel -->
<div class="a" style="left:17px;top:681px;width:3px;height:48px;background:repeating-linear-gradient(180deg,#e8f2fd 0 1.5px,#9fb8dc 1.5px 3px);opacity:0.45"></div>
<div class="a" style="left:24px;top:685px;width:932px;height:27px;background:linear-gradient(180deg,#eef5fd,#d8e8fb);border:1px solid #a8b4c4;border-right-color:#c0c8d4;border-bottom:1.5px solid #1f2f3f;box-shadow:inset 0 -1px 0 #f8fbff"></div>

<!-- status -->
<div id="status" class="a"><div class="a" style="left:895px;top:0;width:1px;height:15px;background:#a8bcd8;box-shadow:1px 0 0 #e8f2fc"></div><div class="a t">Щелкните левой кнопкой мыши на объекте для его выделения (вместе с Ctrl или Shift - добавить к выделенным)</div></div>

<!-- taskbar -->
<div class="a" style="left:0;top:745px;width:960px;height:23px;background:linear-gradient(90deg,rgba(20,40,30,0.35) 0%,rgba(0,0,0,0) 30%,rgba(60,90,60,0.15) 55%,rgba(10,30,20,0.25) 80%,rgba(20,40,30,0.3) 100%),linear-gradient(180deg,#5d7a6a 0%,#42614d 12%,#38573f 50%,#2f4c36 100%);border-top:1px solid #8c9ea6;box-shadow:inset 0 1px 0 rgba(200,215,220,0.35)"></div>
<svg class="a" style="left:0;top:740px" width="960" height="28" viewBox="0 740 960 28">
<defs>
  <radialGradient id="orb" cx="0.5" cy="0.45" r="0.55">
    <stop offset="0" stop-color="#4aa0d8"/><stop offset="0.7" stop-color="#1a5a98"/><stop offset="1" stop-color="#0e3460"/>
  </radialGradient>
  <radialGradient id="globe" cx="0.4" cy="0.35" r="0.65">
    <stop offset="0" stop-color="#8ac0f0"/><stop offset="0.4" stop-color="#2a62b0"/><stop offset="1" stop-color="#0a2a60"/>
  </radialGradient>
  <linearGradient id="btn1" x1="0" y1="0" x2="0" y2="1">
    <stop offset="0" stop-color="#6a8070" stop-opacity="0.9"/><stop offset="0.5" stop-color="#4e6656"/><stop offset="1" stop-color="#3e5646"/>
  </linearGradient>
  <linearGradient id="btn2" x1="0" y1="0" x2="0" y2="1">
    <stop offset="0" stop-color="#a8b8ae"/><stop offset="0.45" stop-color="#8a9c90"/><stop offset="0.5" stop-color="#76887c"/><stop offset="1" stop-color="#6c8072"/>
  </linearGradient>
</defs>
<defs>
  <radialGradient id="tl"><stop offset="0" stop-color="#6a8a64" stop-opacity="0.55"/><stop offset="1" stop-color="#6a8a64" stop-opacity="0"/></radialGradient>
  <radialGradient id="td"><stop offset="0" stop-color="#1a2a38" stop-opacity="0.5"/><stop offset="1" stop-color="#1a2a38" stop-opacity="0"/></radialGradient>
</defs>
<ellipse cx="400" cy="760" rx="40" ry="9" fill="url(#tl)"/>
<ellipse cx="520" cy="760" rx="22" ry="9" fill="url(#td)"/>
<ellipse cx="600" cy="758" rx="35" ry="8" fill="url(#tl)"/>
<ellipse cx="690" cy="764" rx="30" ry="6" fill="url(#tl)"/>
<ellipse cx="760" cy="762" rx="28" ry="8" fill="url(#td)"/>
<ellipse cx="450" cy="756" rx="25" ry="6" fill="url(#td)"/>
<ellipse cx="150" cy="762" rx="40" ry="8" fill="url(#tl)"/>
<ellipse cx="880" cy="762" rx="40" ry="8" fill="url(#tl)"/>
<!-- start orb -->
<circle cx="20" cy="757" r="13.5" fill="url(#orb)" stroke="#9ec4da" stroke-width="0.9"/>
<ellipse cx="20" cy="764" rx="9" ry="5" fill="#40d0ff" opacity="0.45"/>
<path d="M8 755a12 10 0 0 1 24 0c-6-2-18-2-24 0z" fill="#ffffff" fill-opacity="0.22"/>
<g transform="rotate(-8 20 757)">
<path d="M14 751.5c1.8-0.8 3.5-0.5 5.2 0.3v4.6c-1.7-0.8-3.4-1.1-5.2-0.3z" fill="#f46a28"/>
<path d="M20.2 752c1.8 0.8 3.5 0.9 5.2 0v4.6c-1.7 0.9-3.4 0.8-5.2 0z" fill="#88c83a"/>
<path d="M13.6 757c1.8-0.8 3.5-0.5 5.2 0.3v4.6c-1.7-0.8-3.4-1.1-5.2-0.3z" fill="#2aa8f0"/>
<path d="M19.8 757.5c1.8 0.8 3.5 0.9 5.2 0v4.6c-1.7 0.9-3.4 0.8-5.2 0z" fill="#f8c828"/>
</g>
<!-- media player -->
<rect x="55" y="750.5" width="11.5" height="12" rx="1" fill="#d8e0e8" stroke="#a8b4c0" stroke-width="0.8"/>
<circle cx="60.8" cy="756.5" r="4.5" fill="#f0a020"/>
<path d="M59.3 754v5l3.5-2.5z" fill="#fff"/>
<!-- opera button -->
<rect x="80.5" y="746.5" width="117" height="20.5" rx="2" fill="url(#btn1)" stroke="#8a9c92" stroke-width="1"/>
<ellipse cx="92" cy="757" rx="5.5" ry="6" fill="#d01818"/>
<ellipse cx="92" cy="757" rx="2.4" ry="4.2" fill="#6a0c0c"/>
<text x="100.5" y="761" font-family="Liberation Sans" font-size="10.5" fill="#f4f8f4" textLength="90" lengthAdjust="spacingAndGlyphs">forum.motorka.org •...</text>
<!-- folder -->
<path d="M210.5 753h4l1 1.5h7v8h-12z" fill="#e8d070" stroke="#a89040" stroke-width="0.8"/>
<rect x="211.5" y="756" width="10" height="6" fill="#f6e6a0"/>
<rect x="213" y="758" width="7" height="4" fill="#5a9ad0" opacity="0.7"/>
<!-- kompas button -->
<rect x="236.5" y="746.5" width="117" height="20" rx="2" fill="url(#btn2)" stroke="#c8d4cc" stroke-width="1"/>
<circle cx="248" cy="756.5" r="6" fill="#2a80c8" stroke="#a0d0f0" stroke-width="0.8"/>
<path d="M246 753v7M246 757l3.5-3.5M247 756.5l3 3.5" stroke="#fff" stroke-width="1.5" fill="none"/>
<text x="257" y="761" font-family="Liberation Sans" font-size="10.5" fill="#fafcfa" textLength="89" lengthAdjust="spacingAndGlyphs">КОМПАС-3D V11 - [...</text>
<!-- tray -->
<text x="817.5" y="758.5" font-family="Liberation Sans" font-size="9.5" fill="#d0dcd4" textLength="11.5" lengthAdjust="spacingAndGlyphs">RU</text>
<path d="M841 759.5l3-3.5l3 3.5z" fill="#f4f4f4"/>
<circle cx="862.5" cy="756.7" r="6.5" fill="url(#globe)"/>
<path d="M875.5 755h2.5l3-3v10l-3-3h-2.5z" fill="#e8ece8"/>
<path d="M882.5 754.5c1 1 1 3.5 0 4.5M884.5 753c1.8 2 1.8 5.5 0 7.5" fill="none" stroke="#e0e4e0" stroke-width="0.9"/>
<text x="912.5" y="760.5" font-family="Liberation Sans" font-size="9.5" fill="#f0f4f0" textLength="16" lengthAdjust="spacingAndGlyphs">0:03</text>
<rect x="949.5" y="746" width="10.5" height="22" fill="#6a8070" fill-opacity="0.4" stroke="#a8b8b0" stroke-width="1"/>
</svg>


</div>
</body></html>
